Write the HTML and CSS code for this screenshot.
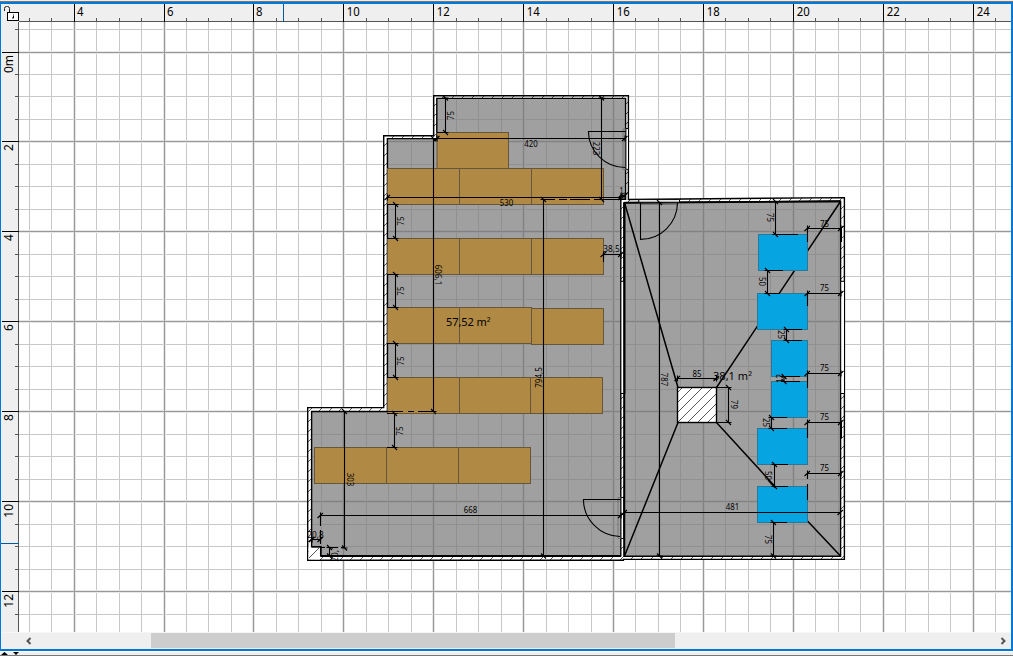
FILE: index.html
```
<!DOCTYPE html>
<html lang="en">
<head>
<meta charset="utf-8">
<title>Floor plan</title>
<link rel="stylesheet" href="styles.css">
</head>
<body>
<div class="window">
  <div class="plan-pane">
    <div class="corner">
      <svg class="lock" width="18" height="18" viewBox="1 4 18 18">
        <path class="shackle" d="M4.500 11V8.500q0-2 2-2h1q2 0 2 2V12"/>
        <rect class="lock-body" x="7.500" y="12.500" width="11" height="8"/>
        <path class="keyhole" d="M13.500 14.500v1M13.500 16v2h-1.500"/>
      </svg>
    </div>
    <svg class="ruler" id="ruler-top" viewBox="19 4 992 18"></svg>
    <svg class="ruler" id="ruler-left" viewBox="1 22 18 610"></svg>
    <svg class="canvas" viewBox="19 22 992 610">
      <defs>
        <pattern id="hatch" width="10" height="10" patternUnits="userSpaceOnUse">
          <rect class="paper" width="10" height="10"/>
          <path class="hatch-line" d="M-2 12L12-2M-2 2L2-2M8 12L12 8"/>
        </pattern>
      </defs>
      <g id="grid"></g>
      <g class="rooms">
        <path class="room" d="M437 98.5H625.5V199H621V555.5H320.5V547H311.5V411.5H387.5V138.5H437Z"/>
        <path class="room" d="M624.5 202.5L840.5 201V556H624.5Z"/>
      </g>
      <g class="walls">
        <path class="wall" d="M433.7 95.7H628.4V199.5L844.4 197.6V559.4H623.4V560.3H307.7V407.6H383.7V135.7H433.7ZM436.8 98.4V138.6H387.4V411.5H311.6V546.8H320.6V555.7H620.8V199.3H625.6V98.4ZM624.2 202.6V556.2H840.6V201.2Z"/>
        <path class="thick" d="M320.5 556H621M624.3 203V556M311.6 547h9v9M624.3 202.8L840.6 201.3"/>
        <rect class="notch" x="308.500" y="547.700" width="11.400" height="11.800"/>
        <path class="hatch-line" d="M309 558L319 548"/>
        <path class="opening" d="M625.8 128.5h2.7v40.8h-2.7zM620.9 281.3h3v112.2h-3zM620.9 497.5h2.7v41h-2.7zM840.7 281.3h3.8v112.2h-3.8zM638.8 199.6h40.7v2.6h-40.7z"/>
        <path class="door-frame" d="M623 129h3v40.5h-3zM618 497.5h3v41h-3zM640 204.500h38"/>
        <path class="thick" d="M624.4 202V394"/>
        <path class="door" d="M625.500 131.500H588.400A37 36.500 0 0 0 625 167.500M621 499.500H583.400A37.500 37.500 0 0 0 620 536.500M640.500 203V239.400A37 37 0 0 0 677.500 203"/>
        <path class="slope" d="M624.500 202.500L678 387.500M840.500 201.500L716.500 387.500M678 422.500L624.500 556M716.500 422.500L775 486.500M775 486.500L840.500 556"/>
        <rect class="wall" x="677.500" y="387.500" width="39" height="35"/>
      </g>
      <g id="furniture"></g>
      <g id="dimensions"></g>
      <path class="slope" d="M768 480L775 487.500"/>
      <path class="ext" d="M387 411.500h16M408 411.500h6M418 411.500h16M543 199.500h12M559 199.500h8M570 199.500h20M594 199.500h31M320.500 515v11M320.500 530v14M320 547.500h5M330 547.500h8M341 547.500h4M329.500 556h-8M387 413.500h8M387 447.500h8M437 132.500h9M387 204.500h9M387 238.500h9M387 274.500h9M387 307.500h9M387 343.500h9M387 377.500h9M603.500 254v8M716 387.500h13M716 422.500h13M776 234.500h22M767 270.500h16M767 293.500h13M786 329.500h16M786 340.500h16M783 376.500h17M783 381.500h17M771 417.500h16M771 428.500h16M774 464.500h14M774 486.500h14M773 522.500h14M807.500 228v14M807.500 293v13M807.500 373v15M807.500 422v16M807.500 473v6M807.500 484v16M841.500 228v14M841.500 422v16"/>
      <text class="area" x="446" y="326" textLength="44.500">57,52 m²</text>
      <text class="area" x="713" y="379.500" textLength="39">38,1 m²</text>
    </svg>
    <div class="scrollbar">
      <svg class="arrow" width="8" height="8" viewBox="0 0 8 8"><path d="M6.500 1L3.500 4L6.500 7"/></svg>
      <div class="thumb"></div>
      <svg class="arrow" width="8" height="8" viewBox="0 0 8 8"><path d="M2.500 1L5.500 4L2.500 7"/></svg>
    </div>
  </div>
  <div class="splitter">
    <svg width="24" height="4" viewBox="0 0 24 4"><path d="M1 3L4.500 0L8 3ZM13 0L16 3L19 0Z"/></svg>
  </div>
</div>
<script src="plan.js"></script>
</body>
</html>
```
FILE: styles.css
```
* { box-sizing: border-box; }
body { margin: 0; background: #fff; font-family: "Noto Sans", "Open Sans", sans-serif; overflow: hidden; }
.window { width: 1013px; height: 656px; display: flex; flex-direction: column; background: #f0f0f0; }
.plan-pane {
  height: 651px;
  display: grid;
  grid-template-columns: 18px 992px;
  grid-template-rows: 18px 610px 17px;
  padding: 4px 2px 2px 1px;
  background: linear-gradient(#eee 0 1px, #777 1px 2px, #0078d7 2px);
}
.corner, .ruler { background: #efefef; display: block; }
.ruler { width: 100%; height: 100%; }
.canvas { width: 992px; height: 610px; display: block; background: #fff; }
.scrollbar {
  grid-column: 1 / 3;
  display: flex;
  align-items: center;
  justify-content: space-between;
  border-top: 1px solid #f6f6f6;
  border-bottom: 1px solid #efefef;
  background: #efefef;
  padding: 0 4px 0 23px;
}
.thumb { width: 524px; height: 15px; margin-left: 119px; margin-right: auto; background: #cdcdcd; }
.arrow path { fill: none; stroke: #555; stroke-width: 2; }
.splitter { height: 5px; border-top: 1px solid #fff; border-bottom: 1px solid #777; }
.splitter svg { display: block; }
.lock { display: block; }
.shackle { fill: none; stroke: #222; stroke-width: 1; }
.lock-body { fill: #fff; stroke: #000; }
.keyhole { fill: none; stroke: #000; }
.ruler-text { font-size: 12px; fill: #000; }
.tick { stroke: #555; shape-rendering: crispEdges; }
.tick-major { stroke: #000; shape-rendering: crispEdges; }
.pointer { stroke: #005a9e; shape-rendering: crispEdges; }
.minor { stroke: #c8c8c8; }
.major { stroke: #999; }
.halo { stroke: #e6e6e6; stroke-width: 3; }
.room { fill: #777; fill-opacity: .7; }
.paper, .notch { fill: #fff; }
.hatch-line { fill: none; stroke: #555; stroke-width: 1; }
.wall { fill: url(#hatch); stroke: #000; stroke-width: 1.4; fill-rule: evenodd; }
.thick { fill: none; stroke: #000; stroke-width: 1.9; }
.opening { fill: #fff; stroke: #000; stroke-width: 1; }
.door-frame { fill: none; stroke: #666; stroke-width: .7; }
.door { fill: none; stroke: #000; stroke-width: 1.1; }
.slope { fill: none; stroke: #000; stroke-width: 1.5; }
.desk { fill: #b08945; stroke: #66573b; stroke-width: 1; }
.seat { fill: #06a4e0; stroke: #2b7795; stroke-width: 1; }
.ext, .dim { fill: none; stroke: #000; stroke-width: 1.1; }
.dim-text { font-size: 8px; text-anchor: middle; fill: #000; }
.area { font-size: 11px; fill: #000; }
```
FILE: plan.js
```
const NS = "http://www.w3.org/2000/svg";
function add(parent, tag, cls, attrs, text) {
  const el = document.createElementNS(NS, tag);
  el.setAttribute("class", cls);
  for (const key in attrs) el.setAttribute(key, attrs[key]);
  if (text !== undefined) el.textContent = text;
  parent.appendChild(el);
}
const line = (parent, cls, x1, y1, x2, y2) => add(parent, "line", cls, { x1, y1, x2, y2 });
const byId = id => document.getElementById(id);

// Rulers and grid: a minor line every 0.5 m, a major line every 2 m.
const grid = byId("grid"), top_ = byId("ruler-top"), left = byId("ruler-left");
const columns = [], rows = [];
for (let k = -2; k <= 41; k++) columns.push([k, Math.floor(74.1 + 22.475 * k) + 0.5]);
for (let k = -1; k <= 25; k++) rows.push([k, Math.floor(52.03 + 22.48 * k) + 0.5]);
for (const [k, x] of columns) if (k % 4) line(grid, "minor", x, 22, x, 632);
for (const [k, y] of rows) if (k % 4) line(grid, "minor", 19, y, 1011, y);
for (const [k, x] of columns) if (k % 4 === 0) line(grid, "halo", x, 22, x, 632);
for (const [k, y] of rows) if (k % 4 === 0) line(grid, "halo", 19, y, 1011, y);
for (const [k, x] of columns) if (k % 4 === 0) line(grid, "major", x, 22, x, 632);
for (const [k, y] of rows) if (k % 4 === 0) line(grid, "major", 19, y, 1011, y);

line(top_, "tick", 19, 21.5, 1011, 21.5);
line(left, "tick", 18.5, 22, 18.5, 632);
for (const [k, x] of columns) {
  const major = k % 4 === 0;
  line(top_, major ? "tick-major" : "tick", x, major ? 4 : 18, x, 22);
  if (major) add(top_, "text", "ruler-text", { x: x + (k < 12 ? 2.5 : 3.2), y: 16, textLength: k < 12 ? 6.5 : 13, lengthAdjust: "spacingAndGlyphs" }, 4 + k / 2);
}
for (const [k, y] of rows) {
  const major = k % 4 === 0;
  line(left, major ? "tick-major" : "tick", major ? 2 : 15, y, 19, y);
  if (major) add(left, "text", "ruler-text", { transform: `translate(13 ${y + 2.5}) rotate(-90)`, "text-anchor": "end" }, k ? k / 2 : "0m");
}
line(top_, "pointer", 283.5, 4, 283.5, 22);
line(left, "pointer", 1, 543.5, 19, 543.5);

// Furniture: [left, top, right, bottom]
const desks = [[437, 132.5, 508.5, 168.5]];
for (const [y, xs] of [[168.5, [387.5, 459.5, 531.5, 603.5]], [238.5, [387.5, 459.5, 531.5, 603.5]], [377.5, [387.5, 459.5, 530.5, 602.5]], [447.5, [314.5, 386.5, 458.5, 530.5]]])
  for (let i = 0; i < 3; i++) desks.push([xs[i], y, xs[i + 1], y + 36]);
desks.push([387.5, 307.5, 459.5, 343.5], [459.5, 307.5, 531.5, 343.5], [531.5, 308.5, 603.5, 344.5]);
const seats = [[758.5, 234.5, 807.5, 270.5], [757.5, 293.5, 807.5, 329.5], [771.5, 340.5, 807.5, 376.5], [771.5, 381.5, 807.5, 417.5], [757.5, 428.5, 807.5, 464.5], [757.5, 486.5, 807.5, 522.5]];
for (const [cls, list] of [["desk", desks], ["seat", seats]])
  for (const [x, y, r, b] of list) add(byId("furniture"), "rect", cls, { x, y, width: r - x, height: b - y });

// Dimension lines: [x1, y1, x2, y2, label, text x, text y, rotation]
const dims = [
  [437, 138.5, 625, 138.5, "420", 531, 147, 0],
  [387.5, 197.5, 621, 197.5, "530", 506.5, 206, 0],
  [621, 195.5, 625, 195.5, "1", 621.5, 194, 0],
  [603.5, 254.5, 621, 254.5, "38,5", 611.5, 252, 0],
  [320.5, 515.5, 621, 515.5, "668", 470.5, 513, 0],
  [624.5, 512.5, 840.5, 512.5, "481", 732.5, 510, 0],
  [677.5, 378.5, 716.5, 378.5, "85", 697, 377, 0],
  [807.5, 228.5, 841, 228.5, "75", 824.5, 227, 0],
  [807.5, 293.5, 841, 293.5, "75", 824.5, 291, 0],
  [807.5, 373.5, 841, 373.5, "75", 824.5, 371, 0],
  [807.5, 422.5, 841, 422.5, "75", 824.5, 420, 0],
  [807.5, 473.5, 841, 473.5, "75", 824.5, 471, 0],
  [312, 539.5, 320.5, 539.5, "20,8", 315.5, 537.5, 0],
  [445.5, 98, 445.5, 132.5, "75", 454, 115.5, -90],
  [601.5, 98, 601.5, 199.5, "223", 593, 148.5, 90],
  [433.5, 138.5, 433.5, 411.5, "606,1", 435, 275, 90],
  [543.5, 199.5, 543.5, 556, "794,5", 541.5, 377.5, -90],
  [395.5, 204.5, 395.5, 238.5, "75", 404, 221, -90],
  [395.5, 274.5, 395.5, 307.5, "75", 404, 291, -90],
  [395.5, 343.5, 395.5, 377.5, "75", 404, 361, -90],
  [394.5, 413.5, 394.5, 447.5, "75", 403.2, 431, -90],
  [344.5, 411.5, 344.5, 548, "303", 346.5, 479.5, 90],
  [329.5, 547.5, 329.5, 556, "20,1", 338, 553.5, -90],
  [659.5, 202.5, 659.5, 556, "787", 661, 379.5, 90],
  [728.5, 387.5, 728.5, 422.5, "79", 730.5, 404.5, 90],
  [775.5, 201.5, 775.5, 234.5, "75", 766.7, 217.5, 90],
  [767.5, 270.5, 767.5, 293.5, "50", 758.7, 281.5, 90],
  [786.5, 329.5, 786.5, 340.5, "25", 777.7, 334.5, 90],
  [784, 376.5, 784, 381.5, "12", 783, 378.5, -90],
  [771.5, 417.5, 771.5, 428.5, "25", 762.7, 422.5, 90],
  [774.5, 464.5, 774.5, 486.5, "50", 765, 475.5, 90],
  [773.5, 522.5, 773.5, 556, "75", 764.7, 539.5, 90]
];
for (const [x1, y1, x2, y2, label, tx, ty, angle] of dims) {
  const layer = byId("dimensions"), flat = y1 === y2;
  line(layer, "dim", x1, y1, x2, y2);
  for (const [x, y] of [[x1, y1], [x2, y2]])
    add(layer, "path", "dim", { d: flat ? `M${x - 3} ${y + 2.5}L${x + 2.5} ${y - 2.5}M${x} ${y - 3}v6` : `M${x - 2.5} ${y - 2.5}L${x + 2.5} ${y + 2.5}M${x - 3} ${y}h6` });
  add(layer, "text", "dim-text", { transform: `translate(${tx} ${ty}) rotate(${angle})`, textLength: label.length === 1 ? 4 : label.includes(",") ? label.length * 4.1 : label.length * 4.5, lengthAdjust: "spacingAndGlyphs" }, label);
}
```
